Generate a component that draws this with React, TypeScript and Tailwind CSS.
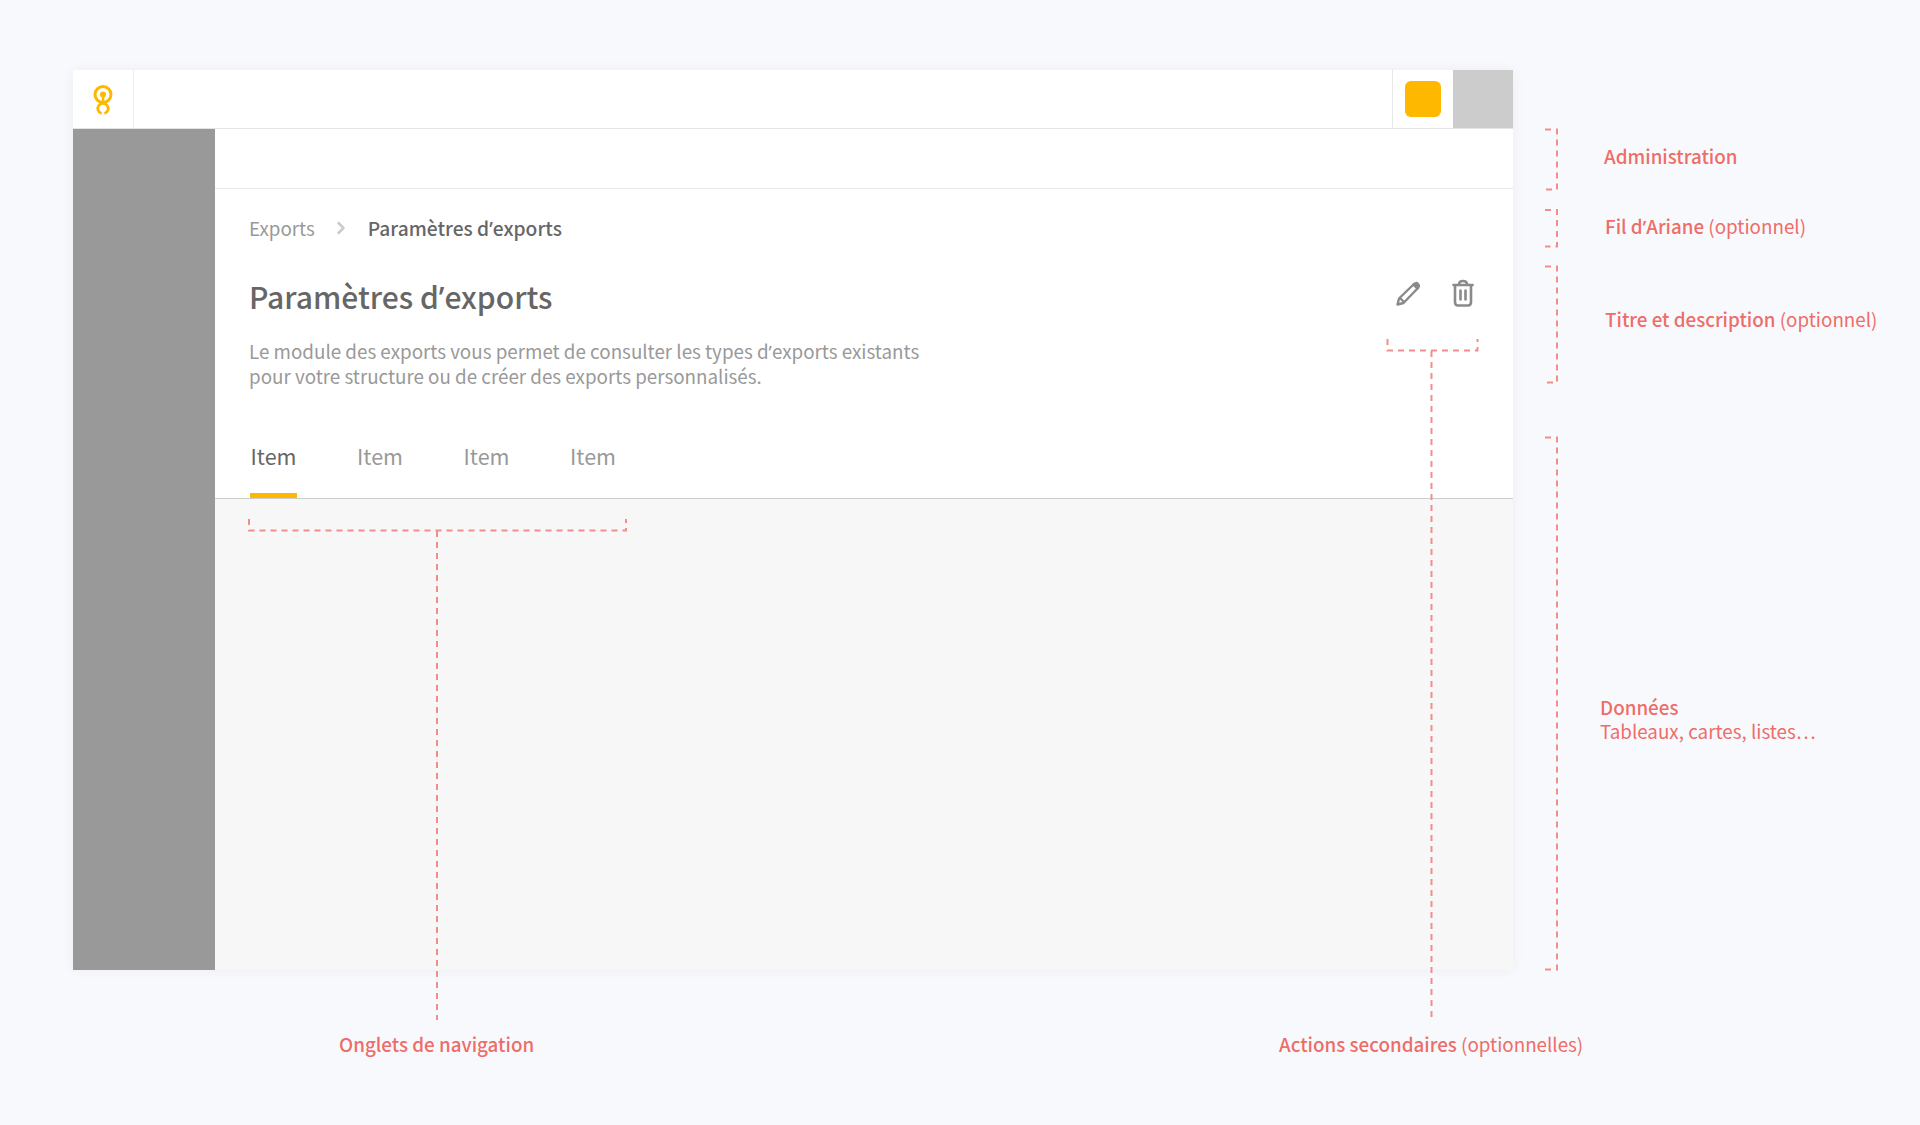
import React from 'react';
import { ChevronRight } from 'lucide-react';

const FONT = "font-['Noto_Sans_CJK_SC','Noto_Sans',sans-serif]";

// the CJK font draws this quote full width, so it comes from Noto Sans
function Apos() {
  return <span className="font-['Noto_Sans',sans-serif]">’</span>;
}

function Logo() {
  return (
    <svg width="22" height="32" viewBox="0 0 22 32" fill="none" stroke="#ffb800">
      <circle cx="11" cy="11.500" r="8" strokeWidth="3" />
      <circle cx="11" cy="11.500" r="3" fill="#ffb800" stroke="none" />
      <path d="M11 12v8" strokeWidth="2.500" />
      <path d="M9.600 30.500 A5.200 5.200 0 1 1 12.400 30.500" strokeWidth="2.800" />
    </svg>
  );
}

function PencilIcon() {
  return (
    <svg width="26" height="26" viewBox="0 0 26 26" fill="none" stroke="#8a8a8a" strokeWidth="2.400" strokeLinejoin="round">
      <path d="M2.500 23.500 L4 17.500 L18.500 3.500 L22.500 7.500 L8.500 22 Z" />
      <path d="M18.500 3.500 C20 1.800 21.800 1.600 23 3 C24.400 4.400 24.200 6 22.500 7.500 Z" fill="#8a8a8a" />
      <path d="M5 17 L9 21" />
    </svg>
  );
}

function TrashIcon() {
  return (
    <svg width="22" height="28" viewBox="0 0 22 28" fill="none" stroke="#8a8a8a" strokeWidth="2.600" strokeLinecap="round">
      <path d="M1.500 6h19" />
      <path d="M7 5.500C7 3 8.500 2 11 2s4 1 4 3.500" />
      <path d="M3 6.500V23C3 25.500 4 26.500 6 26.500H16C18 26.500 19 25.500 19 23V6.500" />
      <path d="M8.500 11.500v9M13.500 11.500v9" />
    </svg>
  );
}

// dashed brackets and leader lines drawn over the mockup
function Annotations() {
  return (
    <svg className="absolute inset-0 pointer-events-none" width="1920" height="1125" fill="none" stroke="#f08e8c" strokeWidth="2" strokeDasharray="6 5">
      <path d="M1545 129.500 H1557 V189.500 H1545" />
      <path d="M1545 210 H1557 V246.500 H1545" />
      <path d="M1545 266.500 H1557 V382.500 H1545" />
      <path d="M1545 437.500 H1557 V969.500 H1545" />
      <path d="M1387.500 339 V350.500 H1477.500 V339" />
      <path d="M1431.500 351 V1020" />
      <path d="M249 519 V530.500 H626 V519" />
      <path d="M437 531 V1020" />
    </svg>
  );
}

function Label({ className, children }: { className: string; children: React.ReactNode }) {
  return <div className={`absolute text-[18.800px] leading-[24px] text-[#ee6d68] whitespace-nowrap ${className}`}>{children}</div>;
}

export default function App() {
  const tabs = ['Item', 'Item', 'Item', 'Item'];

  return (
    <div className={`relative w-[1920px] h-[1125px] overflow-hidden bg-[#f8f9fd] pt-[70px] pl-[73px] ${FONT}`}>
      <div className="flex flex-col w-[1440px] h-[900px] bg-white shadow-[0_0_12px_rgba(0,0,0,0.05)]">
        <header className="flex h-[59px] shrink-0 border-b border-[#e4e4e4]">
          <div className="flex w-[61px] items-center justify-center border-r border-[#eeeeee]">
            <Logo />
          </div>
          <div className="flex-1" />
          <div className="flex w-[61px] items-center justify-center border-l border-[#e8e8e8]">
            <div className="w-[36px] h-[36px] rounded-[6px] bg-[#ffb800]" />
          </div>
          <div className="w-[60px] bg-[#cccccc]" />
        </header>
        <div className="flex flex-1 min-h-0">
          <aside className="w-[142px] shrink-0 bg-[#999999]" />
          <main className="flex flex-1 flex-col min-w-0">
            <div className="h-[60px] shrink-0 border-b border-[#e8e8e8]" />
            <div className="shrink-0 pl-[34px] pr-[34px]">
              <nav className="flex items-center h-[26px] mt-[26px] text-[18.800px] leading-[26px]">
                <span className="text-[#999999]">Exports</span>
                <ChevronRight strokeWidth={3} className="w-[20px] h-[20px] ml-[16px] mr-[17px] text-[#cccccc]" />
                <span className="text-[19.200px] font-medium text-[#666666]">Paramètres d<Apos />exports</span>
              </nav>
              <div className="flex justify-between mt-[35px]">
                <h1 className="text-[30px] leading-[40px] font-medium text-[#666666]">Paramètres d<Apos />exports</h1>
                <div className="flex items-start gap-[31px] pr-[5px] pt-[3px]">
                  <div className="mt-[2px]">
                    <PencilIcon />
                  </div>
                  <TrashIcon />
                </div>
              </div>
              <p className="mt-[21px] text-[18.800px] leading-[24px] text-[#999999]">
                Le module des exports vous permet de consulter les types d<Apos />exports existants
                <br />
                pour votre structure ou de créer des exports personnalisés.
              </p>
              <nav className="flex gap-[59.500px] mt-[53px] ml-px">
                {tabs.map((tab, i) => (
                  <div key={i} className={`w-[47px] h-[57px] text-center text-[21.500px] leading-[30px] ${i === 0 ? 'text-[#666666] border-b-[5px] border-[#ffb800]' : 'text-[#999999]'}`}>
                    {tab}
                  </div>
                ))}
              </nav>
            </div>
            <div className="flex-1 bg-[#f7f7f7] border-t border-[#cccccc]" />
          </main>
        </div>
      </div>

      <Annotations />

      <Label className="left-[1604px] top-[144px] font-medium">Administration</Label>
      <Label className="left-[1605px] top-[214px]"><span className="font-medium">Fil d<Apos />Ariane</span> (optionnel)</Label>
      <Label className="left-[1605px] top-[307px]"><span className="font-medium">Titre et description</span> (optionnel)</Label>
      <Label className="left-[1600px] top-[695px]"><span className="font-medium">Données</span><br />Tableaux, cartes, listes…</Label>
      <Label className="left-[339px] top-[1032px] font-medium">Onglets de navigation</Label>
      <Label className="left-[1279px] top-[1032px]"><span className="font-medium">Actions secondaires</span> (optionnelles)</Label>
    </div>
  );
}
